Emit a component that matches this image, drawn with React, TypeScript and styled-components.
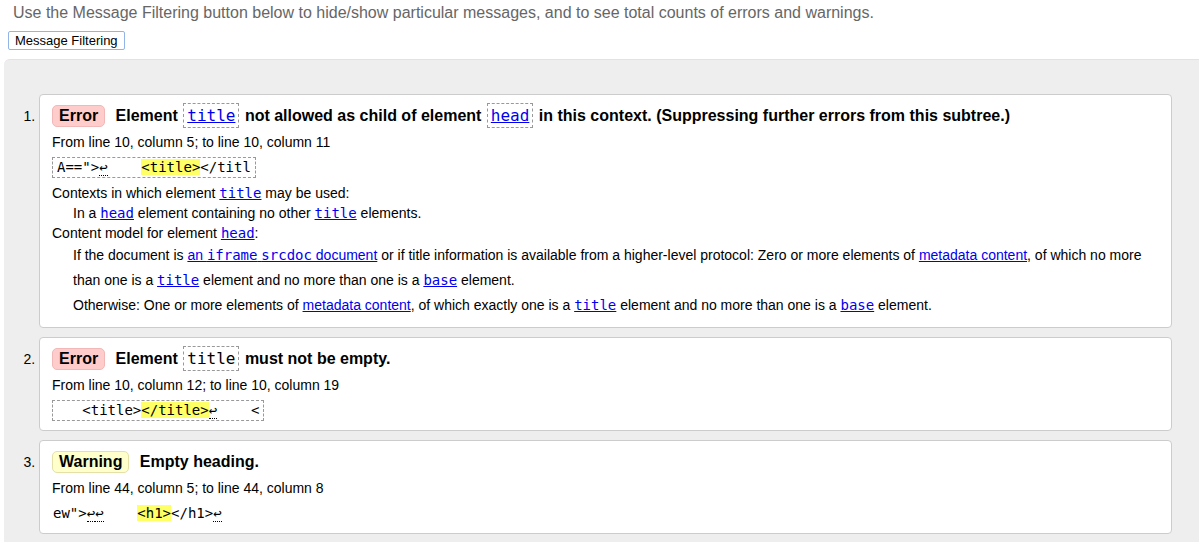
import React from 'react';
import styled, { createGlobalStyle, css } from 'styled-components';

const GlobalStyle = createGlobalStyle`
  html, body {
    margin: 0;
    padding: 0;
    background: #fff;
    overflow: hidden;
  }
  body {
    font-family: 'Liberation Sans', Arial, sans-serif;
    color: #000;
  }
`;

const mono = `'DejaVu Sans Mono', 'Liberation Mono', monospace`;

const Intro = styled.p`
  margin: 4px 0 0 13px;
  font-size: 16px;
  line-height: 18px;
  color: #666;
`;

const FilterButton = styled.button`
  display: block;
  margin: 9px 0 0 8px;
  height: 19px;
  padding: 0 6px;
  font-family: 'Liberation Sans', Arial, sans-serif;
  font-size: 13px;
  line-height: 17px;
  color: #000;
  background: #fff;
  border: 1px solid #93b4e8;
  border-radius: 2px;
`;

const Panel = styled.div`
  margin: 9px 0 0 4px;
  padding: 34px 0 40px;
  background: #eee;
  border-top: 1px solid #e2e2e2;
  border-top-left-radius: 6px;
`;

const MessageList = styled.ol`
  margin: 0;
  padding: 0 27px 0 35px;
  list-style: decimal outside;
  font-size: 14px;
`;

const Message = styled.li`
  margin: 0 0 9px;
  padding: 9px 12px 9px;
  background: #fff;
  border: 1px solid #ccc;
  border-radius: 4px;

  &::marker {
    font-size: 14px;
  }
`;

const Heading = styled.p`
  margin: 0 0 4px;
  font-size: 16px;
  font-weight: bold;
  line-height: 24px;
`;

const Badge = styled.span<{ kind: 'error' | 'warning' }>`
  display: inline-block;
  padding: 1px 6px;
  margin-right: 6px;
  line-height: 18px;
  border-radius: 5px;
  ${({ kind }) =>
    kind === 'error'
      ? css`
          background: #ffcccc;
          border: 1px solid #f2b8b8;
        `
      : css`
          background: #ffffcc;
          border: 1px solid #e4e0a8;
        `}
`;

const HeadCode = styled.code`
  font-family: ${mono};
  font-weight: normal;
  font-size: 16px;
  padding: 2px 3px;
  margin: 0 1px;
  border: 1px dashed #999;
`;

const Location = styled.p`
  margin: 0;
  line-height: 20px;
`;

const Extract = styled.p`
  margin: 5px 0 0;
  line-height: 17px;
`;

const ExtractCode = styled.code<{ boxed?: boolean }>`
  display: inline-block;
  font-family: ${mono};
  font-size: 14px;
  line-height: 17px;
  white-space: pre;
  padding: 1px 4px 1px ${({ boxed }) => (boxed ? '4px' : '0')};
  border: 1px dashed ${({ boxed }) => (boxed ? '#999' : 'transparent')};
`;

const Mark = styled.b`
  font-weight: normal;
  background: #ffff66;
`;

const LineFeed = styled.span`
  border-bottom: 1px dotted #000;
`;

const Details = styled.dl`
  margin: 5px 0 0;
`;

const Term = styled.dt`
  line-height: 20px;
`;

const Desc = styled.dd<{ tall?: boolean }>`
  margin: 0 0 0 21px;
  line-height: ${({ tall }) => (tall ? '25px' : '20px')};
`;

const Para = styled.p`
  margin: 0;
`;

const Link = styled.a<{ code?: boolean }>`
  color: #00e;
  text-decoration: underline;
  ${({ code }) =>
    code &&
    css`
      font-family: ${mono};
      font-weight: normal;
    `}
`;

const Lf = () => <LineFeed title='Line break'>↩</LineFeed>;

export default function App() {
  return (
    <>
      <GlobalStyle />
      <Intro>
        Use the Message Filtering button below to hide/show particular messages, and to see total counts of errors and
        warnings.
      </Intro>
      <FilterButton>Message Filtering</FilterButton>
      <Panel>
        <MessageList>
          <Message>
            <Heading>
              <Badge kind='error'>Error</Badge> Element{' '}
              <HeadCode>
                <Link code>title</Link>
              </HeadCode>{' '}
              not allowed as child of element{' '}
              <HeadCode>
                <Link code>head</Link>
              </HeadCode>{' '}
              in this context. (Suppressing further errors from this subtree.)
            </Heading>
            <Location>From line 10, column 5; to line 10, column 11</Location>
            <Extract>
              <ExtractCode boxed>
                A=={'">'}
                <Lf />
                {'    '}
                <Mark>{'<title>'}</Mark>
                {'</titl'}
              </ExtractCode>
            </Extract>
            <Details>
              <Term>
                Contexts in which element <Link code>title</Link> may be used:
              </Term>
              <Desc>
                In a <Link code>head</Link> element containing no other <Link code>title</Link> elements.
              </Desc>
              <Term>
                Content model for element <Link code>head</Link>:
              </Term>
              <Desc tall>
                <Para>
                  If the document is <Link>an <Link code as='span'>iframe</Link> <Link code as='span'>srcdoc</Link> document</Link>{' '}
                  or if title information is available from a higher-level protocol: Zero or more elements of{' '}
                  <Link>metadata content</Link>, of which no more than one is a <Link code>title</Link> element and no
                  more than one is a <Link code>base</Link> element.
                </Para>
                <Para>
                  Otherwise: One or more elements of <Link>metadata content</Link>, of which exactly one is a{' '}
                  <Link code>title</Link> element and no more than one is a <Link code>base</Link> element.
                </Para>
              </Desc>
            </Details>
          </Message>

          <Message>
            <Heading>
              <Badge kind='error'>Error</Badge> Element <HeadCode>title</HeadCode> must not be empty.
            </Heading>
            <Location>From line 10, column 12; to line 10, column 19</Location>
            <Extract>
              <ExtractCode boxed>
                {'   <title>'}
                <Mark>{'</title>'}</Mark>
                <Lf />
                {'    <'}
              </ExtractCode>
            </Extract>
          </Message>

          <Message>
            <Heading>
              <Badge kind='warning'>Warning</Badge> Empty heading.
            </Heading>
            <Location>From line 44, column 5; to line 44, column 8</Location>
            <Extract>
              <ExtractCode>
                {'ew">'}
                <Lf />
                <Lf />
                {'    '}
                <Mark>{'<h1>'}</Mark>
                {'</h1>'}
                <Lf />
              </ExtractCode>
            </Extract>
          </Message>
        </MessageList>
      </Panel>
    </>
  );
}
